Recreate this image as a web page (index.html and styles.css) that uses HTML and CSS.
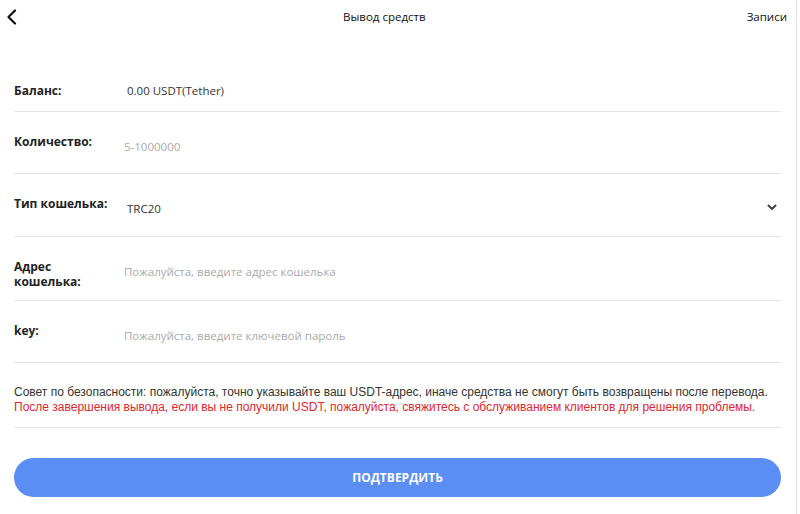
FILE: index.html
```html
<!DOCTYPE html>
<html lang="ru">
  <head>
    <meta charset="UTF-8" />
    <title>Вывод средств</title>
    <link rel="stylesheet" href="styles.css">
  </head>
  <body>
    <main class="page">
      <header class="topbar">
        <a class="back" href="#">
          <svg width="12" height="16" viewBox="0 0 12 16"><path d="M9 1.5L2.5 8L9 14.5" fill="none" stroke="#111" stroke-width="2.2" stroke-linecap="round" stroke-linejoin="round"/></svg>
        </a>
        <h1 class="title">Вывод средств</h1>
        <a class="records" href="#">Записи</a>
      </header>

      <form class="form" autocomplete="off">
        <div class="row row-balance">
          <label class="label">Баланс:</label>
          <span class="value">0.00 USDT(Tether)</span>
        </div>
        <div class="row">
          <label class="label" for="amount">Количество:</label>
          <input class="field" type="text" id="amount" placeholder="5-1000000" />
        </div>
        <div class="row row-wallet">
          <label class="label">Тип кошелька:</label>
          <span class="value">TRC20</span>
          <svg class="caret" width="10" height="7" viewBox="0 0 10 7"><path d="M1.5 1.5L5 5L8.5 1.5" fill="none" stroke="#444" stroke-width="2" stroke-linecap="round" stroke-linejoin="round"/></svg>
        </div>
        <div class="row row-address">
          <label class="label" for="address">Адрес кошелька:</label>
          <input class="field" type="text" id="address" placeholder="Пожалуйста, введите адрес кошелька" />
        </div>
        <div class="row">
          <label class="label" for="key">key:</label>
          <input class="field" type="password" id="key" placeholder="Пожалуйста, введите ключевой пароль" />
        </div>

        <div class="tip">
          <p>Совет по безопасности: пожалуйста, точно указывайте ваш USDT-адрес, иначе средства не смогут быть возвращены после перевода.</p>
          <p class="warn">После завершения вывода, если вы не получили USDT, пожалуйста, свяжитесь с обслуживанием клиентов для решения проблемы.</p>
        </div>

        <button class="submit" type="submit">ПОДТВЕРДИТЬ</button>
      </form>
    </main>
  </body>
</html>
```

FILE: styles.css
```css
body {
  margin: 0;
  padding: 0;
  background-color: #fff;
  color: #222;
  font-family: "Open Sans", "Liberation Sans", Arial, sans-serif;
}

.page {
  width: 797px;
  min-height: 514px;
  border-right: 1px solid #e4e4e4;
  box-sizing: border-box;
}

.topbar {
  height: 49px;
  display: flex;
  align-items: flex-start;
  justify-content: space-between;
  padding: 8px 9px 0 6px;
  box-sizing: border-box;
}

.back {
  display: block;
  height: 16px;
}

.title {
  margin: 0;
  font-size: 11.5px;
  font-weight: normal;
  line-height: 18px;
  color: #111;
  padding-left: 4px;
}

.records {
  font-size: 11.5px;
  line-height: 18px;
  color: #111;
  text-decoration: none;
}

.form {
  padding: 0 15px 0 14px;
}

.row {
  display: flex;
  align-items: flex-start;
  min-height: 62px;
  padding-top: 22px;
  padding-bottom: 10px;
  border-bottom: 1px solid #e5e5e5;
  box-sizing: border-box;
}

.row-balance {
  padding-top: 34px;
  min-height: 63px;
}

.row-wallet {
  min-height: 63px;
}

.row-address {
  min-height: 64px;
}

.label {
  width: 100px;
  flex-shrink: 0;
  margin-right: 10px;
  font-size: 12px;
  font-weight: bold;
  line-height: 15px;
  color: #222;
}

.value {
  padding-left: 3px;
  font-size: 11.5px;
  line-height: 15px;
  color: #333;
}

.row .value {
  margin-top: 5px;
}

.row-balance .value {
  margin-top: 0;
}

.field {
  flex: 1;
  margin-top: 5px;
  padding: 0;
  border: none;
  outline: none;
  font-family: inherit;
  font-size: 11.5px;
  line-height: 15px;
  color: #333;
  background: transparent;
}

.field::placeholder {
  color: #aaa;
}

.caret {
  margin-left: auto;
  margin-top: 8px;
  margin-right: 4px;
}

.tip {
  padding: 22px 0 12px;
  border-bottom: 1px solid #e5e5e5;
  font-family: "Liberation Sans", Arial, sans-serif;
  font-size: 12px;
  line-height: 15px;
  color: #333;
}

.tip p {
  margin: 0;
}

.warn {
  color: #e0262e;
}

.submit {
  display: block;
  width: 100%;
  height: 39px;
  margin-top: 30px;
  border: none;
  border-radius: 20px;
  background-color: #5b8ef5;
  color: #fff;
  font-family: inherit;
  font-size: 12px;
  font-weight: bold;
  cursor: pointer;
}
```
